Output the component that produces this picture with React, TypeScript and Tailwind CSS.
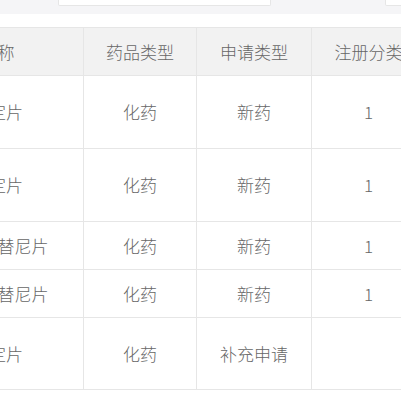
const rows = [
  { name: "氯雷他定片", drug: "化药", apply: "新药", cls: "1", h: "h-[73px]" },
  { name: "氯雷他定片", drug: "化药", apply: "新药", cls: "1", h: "h-[73px]" },
  { name: "甲磺酸奥希替尼片", drug: "化药", apply: "新药", cls: "1", h: "h-[48px]" },
  { name: "甲磺酸奥希替尼片", drug: "化药", apply: "新药", cls: "1", h: "h-[48px]" },
  { name: "氯雷他定片", drug: "化药", apply: "补充申请", cls: "", h: "h-[72px]" },
];

export default function App() {
  return (
    <div className="w-[401px] h-[401px] overflow-hidden bg-white font-['Noto_Sans_CJK_SC',sans-serif] text-[17px] font-light text-[#666]">
      {/* 搜索栏 */}
      <div className="h-[14px] bg-[#f5f5f7] flex items-start overflow-hidden">
        <div className="shrink-0 ml-[58px] w-[213px] h-[6px] bg-white border border-t-0 border-[#e6e6e6] rounded-b-[2px]"></div>
        <div className="shrink-0 ml-[114px] w-[30px] h-[6px] bg-white border border-t-0 border-[#e6e6e6] rounded-b-[2px]"></div>
      </div>

      <div className="mt-[13px] -ml-[123px]">
        <table className="border-collapse table-fixed w-[548px]">
          <colgroup>
            <col className="w-[206px]" />
            <col className="w-[113px]" />
            <col className="w-[115px]" />
            <col className="w-[114px]" />
          </colgroup>
          <thead>
            <tr className="h-[48px] bg-[#f2f2f2]">
              <th className="border border-[#e6e6e6] font-light text-center whitespace-nowrap">药品名称</th>
              <th className="border border-[#e6e6e6] font-light text-center">药品类型</th>
              <th className="border border-[#e6e6e6] font-light text-center">申请类型</th>
              <th className="border border-[#e6e6e6] font-light text-center whitespace-nowrap">注册分类</th>
            </tr>
          </thead>
          <tbody>
            {rows.map((r, i) => (
              <tr key={i} className={r.h}>
                <td className="border border-[#e6e6e6] text-center whitespace-nowrap">{r.name}</td>
                <td className="border border-[#e6e6e6] text-center">{r.drug}</td>
                <td className="border border-[#e6e6e6] text-center">{r.apply}</td>
                <td className="border border-[#e6e6e6] text-center">{r.cls}</td>
              </tr>
            ))}
          </tbody>
        </table>
      </div>
    </div>
  );
}
